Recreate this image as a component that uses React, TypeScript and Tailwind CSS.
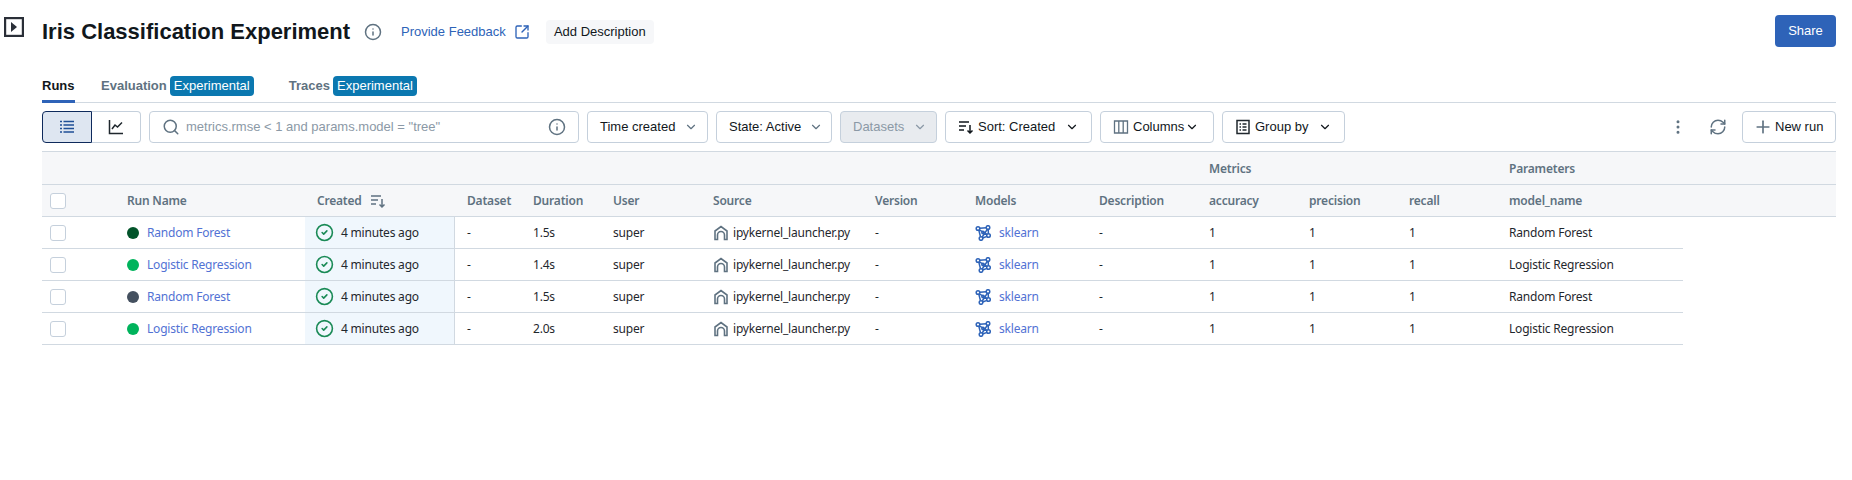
import React from "react";
import {
  ChevronDown,
  CircleCheck,
  EllipsisVertical,
  Info,
  Plus,
  RefreshCw,
  Search,
  SquareArrowOutUpRight,
} from "lucide-react";

const rows = [
  { name: "Random Forest", dot: "bg-[#02542a]", duration: "1.5s" },
  { name: "Logistic Regression", dot: "bg-[#00b35c]", duration: "1.4s" },
  { name: "Random Forest", dot: "bg-[#44505f]", duration: "1.5s" },
  { name: "Logistic Regression", dot: "bg-[#00b35c]", duration: "2.0s" },
];

function SortIcon({ className }: { className?: string }) {
  return (
    <svg viewBox="0 0 16 16" fill="none" stroke="currentColor" strokeWidth="1.5" className={className}>
      <path d="M1 3h10M1 7h7M1 11h5M12 6v8M9.5 11.5 12 14l2.5-2.5" />
    </svg>
  );
}

function ColumnsIcon() {
  return (
    <svg viewBox="0 0 16 16" fill="none" stroke="currentColor" strokeWidth="1.3" className="w-4 h-4 text-[#5f7281]">
      <path d="M1.500 2h13v12h-13zM5.800 2v12M10.200 2v12" />
    </svg>
  );
}

function GroupIcon() {
  return (
    <svg viewBox="0 0 16 16" fill="none" stroke="currentColor" strokeWidth="1.5" className="w-4 h-4 text-[#1f272d]">
      <path d="M2 1.500h12v13H2zM4.500 5h1.500M7.500 5h4M4.500 8h1.500M7.500 8h4M4.500 11h1.500M7.500 11h4" />
    </svg>
  );
}

function SourceIcon() {
  return (
    <svg viewBox="0 0 16 16" fill="none" stroke="#5f7281" strokeWidth="1.6" className="w-4 h-4 shrink-0">
      <path d="M2 14.500V6L8 1.500 14 6v8.500h-2.500V10a3.500 3.500 0 0 0-7 0v4.500z" />
    </svg>
  );
}

function ModelIcon() {
  return (
    <svg viewBox="0 0 16 16" fill="none" stroke="#2e63b8" strokeWidth="1.5" className="w-4 h-4 shrink-0">
      <circle cx="3" cy="3.500" r="1.800" />
      <circle cx="13" cy="2.500" r="1.800" />
      <circle cx="13.500" cy="10.500" r="1.800" />
      <circle cx="6" cy="13.500" r="1.800" />
      <circle cx="8" cy="7.500" r="1.200" />
      <path d="M4.800 3.300 11.200 2.700M4.300 4.800 12.200 9.300M3.800 5.100 5.500 11.800M12.400 4.200 7.200 12M7.700 13 12 11.400M13.200 4.300 13.400 8.700" />
    </svg>
  );
}

function Checkbox() {
  return <div className="w-4 h-4 rounded-[3px] border border-[#c5d0dc] bg-white" />;
}

function ToolbarButton({ className, children }: { className: string; children: React.ReactNode }) {
  return (
    <div className={`h-8 flex items-center rounded border border-[#c5d0dc] text-[13px] text-[#11171c] ${className}`}>
      {children}
    </div>
  );
}

function Badge() {
  return (
    <span className="ml-[3px] h-5 w-[84px] flex items-center justify-center rounded bg-[#0b78b0] text-white text-[13px] font-normal">
      Experimental
    </span>
  );
}

export default function App() {
  return (
    <div className="w-[1852px] h-[480px] bg-white overflow-hidden font-['Liberation_Sans',sans-serif] text-[#11171c]">
      {/* Title bar */}
      <div className="flex items-start h-[103px]">
        <div className="w-[42px] pt-[17px] pl-1">
          <svg viewBox="0 0 20 20" className="w-5 h-5" fill="none">
            <rect x="1.100" y="1.100" width="17.800" height="17.800" stroke="#2a2f38" strokeWidth="2.200" />
            <path d="M7 5v10l6-5z" fill="#2a2f38" />
          </svg>
        </div>
        <div className="flex flex-1 items-center h-6 mt-5 pr-4">
          <h1 className="text-[22px] font-bold leading-6 w-[322px] whitespace-nowrap">Iris Classification Experiment</h1>
          <Info className="w-[18px] h-[18px] text-[#5f7281]" />
          <span className="ml-[19px] text-[13px] text-[#2e63b8] whitespace-nowrap">Provide Feedback</span>
          <SquareArrowOutUpRight className="ml-2 w-4 h-4 text-[#2e63b8]" />
          <span className="ml-4 h-6 w-[108px] flex items-center justify-center rounded bg-[#f6f7f9] text-[13px]">
            Add Description
          </span>
          <div className="ml-auto -mt-[2px] h-8 w-[61px] flex items-center justify-center rounded bg-[#2e63b8] text-white text-[13px]">
            Share
          </div>
        </div>
      </div>

      <div className="ml-[42px] w-[1794px]">
        {/* Tabs */}
        <div className="-mt-[27px] h-[27px] flex items-start border-b border-[#d1d9e1] text-[13px] font-bold leading-5 text-[#5f7281]">
          <span className="h-[27px] w-[33px] text-[#11171c] border-b-[3px] border-[#2e63b8]">Runs</span>
          <span className="ml-[26px] flex">Evaluation<Badge /></span>
          <span className="ml-[35px] flex">Traces<Badge /></span>
        </div>

        {/* Toolbar */}
        <div className="flex items-center gap-2 h-[49px] border-b border-[#d1d9e1]">
          <div className="flex h-8 w-[99px]">
            <div className="w-[50px] flex items-center justify-center rounded-l border border-[#0e2a5c] bg-[#dee6f1]">
              <svg viewBox="0 0 16 16" className="w-4 h-4" stroke="#1f4f96" strokeWidth="1.500">
                <path d="M1 2.500h2M4.500 2.500H15M1 6h2M4.500 6H15M1 9.500h2M4.500 9.500H15M1 13h2M4.500 13H15" />
              </svg>
            </div>
            <div className="flex-1 flex items-center justify-center rounded-r border border-l-0 border-[#c5d0dc]">
              <svg viewBox="0 0 16 16" fill="none" className="w-4 h-4" stroke="#1f272d" strokeWidth="1.500">
                <path d="M1.500 1v13.500H15M4 10l3-4 2.500 2L14 3.500" />
              </svg>
            </div>
          </div>
          <ToolbarButton className="w-[430px] pl-[12px] pr-[12px]">
            <Search className="w-[18px] h-[18px] text-[#5f7281]" />
            <span className="ml-[6px] text-[#8b99a6]">metrics.rmse &lt; 1 and params.model = "tree"</span>
            <Info className="ml-auto w-[18px] h-[18px] text-[#5f7281]" />
          </ToolbarButton>
          <ToolbarButton className="w-[121px] pl-3">
            Time created
            <ChevronDown className="ml-[9px] w-[14px] h-[14px] text-[#5f7281]" />
          </ToolbarButton>
          <ToolbarButton className="w-[116px] pl-3">
            State: Active
            <ChevronDown className="ml-2 w-[14px] h-[14px] text-[#5f7281]" />
          </ToolbarButton>
          <ToolbarButton className="w-[97px] pl-3 bg-[#e8ebef] !text-[#8b99a6]">
            Datasets
            <ChevronDown className="ml-[9px] w-[14px] h-[14px]" />
          </ToolbarButton>
          <ToolbarButton className="w-[147px] pl-3">
            <SortIcon className="w-4 h-4" />
            <span className="ml-1">Sort: Created</span>
            <ChevronDown className="ml-[10px] w-[14px] h-[14px]" />
          </ToolbarButton>
          <ToolbarButton className="w-[114px] pl-3">
            <ColumnsIcon />
            <span className="ml-1">Columns</span>
            <ChevronDown className="ml-px w-[14px] h-[14px]" />
          </ToolbarButton>
          <ToolbarButton className="w-[123px] pl-3">
            <GroupIcon />
            <span className="ml-1">Group by</span>
            <ChevronDown className="ml-[10px] w-[14px] h-[14px]" />
          </ToolbarButton>
          <EllipsisVertical className="ml-auto w-[18px] h-[18px] text-[#5f7281]" />
          <RefreshCw className="ml-[14px] w-[18px] h-[18px] text-[#5f7281]" />
          <ToolbarButton className="ml-[7px] w-[94px] pl-[10px]">
            <Plus className="w-5 h-5 text-[#5f7281]" />
            <span className="ml-[2px]">New run</span>
          </ToolbarButton>
        </div>

        {/* Table */}
        <div className="font-['Noto_Sans',sans-serif] text-[12px] tracking-[-0.2px]">
          <div className="flex h-[33px] pt-px items-center bg-[#f6f7f9] border-b border-[#d1d9e1] font-semibold text-[#5f7281]">
            <span className="ml-[1167px] w-[300px]">Metrics</span>
            <span>Parameters</span>
          </div>
          <div className="flex h-[32px] items-center bg-[#f6f7f9] border-b border-[#d1d9e1] font-semibold text-[#5f7281]">
            <div className="w-[85px] pl-2"><Checkbox /></div>
            <span className="w-[190px]">Run Name</span>
            <span className="w-[150px] flex items-center">Created <SortIcon className="ml-2 w-4 h-4" /></span>
            <span className="w-[66px]">Dataset</span>
            <span className="w-[80px]">Duration</span>
            <span className="w-[100px]">User</span>
            <span className="w-[162px]">Source</span>
            <span className="w-[100px]">Version</span>
            <span className="w-[124px]">Models</span>
            <span className="w-[110px]">Description</span>
            <span className="w-[100px]">accuracy</span>
            <span className="w-[100px]">precision</span>
            <span className="w-[100px]">recall</span>
            <span>model_name</span>
          </div>
          {rows.map((run, idx) => (
            <div key={idx} className="flex h-[32px] w-[1641px] items-center border-b border-[#d1d9e1] text-[#1f272d]">
              <div className="w-[85px] pl-2"><Checkbox /></div>
              <div className="w-[178px] flex items-center">
                <span className={`w-3 h-3 rounded-full ${run.dot}`} />
                <span className="ml-2 text-[#5272d4]">{run.name}</span>
              </div>
              <div className="w-[150px] h-full pl-[10px] flex items-center bg-[#f0f7fd] border-r border-[#d1d9e1]">
                <CircleCheck className="w-[19px] h-[19px] text-[#1a8a56]" />
                <span className="ml-[7px]">4 minutes ago</span>
              </div>
              <span className="w-[78px] pl-3">-</span>
              <span className="w-[80px]">{run.duration}</span>
              <span className="w-[100px]">super</span>
              <div className="w-[162px] flex items-center">
                <SourceIcon />
                <span className="ml-1">ipykernel_launcher.py</span>
              </div>
              <span className="w-[100px]">-</span>
              <div className="w-[124px] flex items-center">
                <ModelIcon />
                <span className="ml-2 text-[#5272d4]">sklearn</span>
              </div>
              <span className="w-[110px]">-</span>
              <span className="w-[100px]">1</span>
              <span className="w-[100px]">1</span>
              <span className="w-[100px]">1</span>
              <span>{run.name}</span>
            </div>
          ))}
        </div>
      </div>
    </div>
  );
}
